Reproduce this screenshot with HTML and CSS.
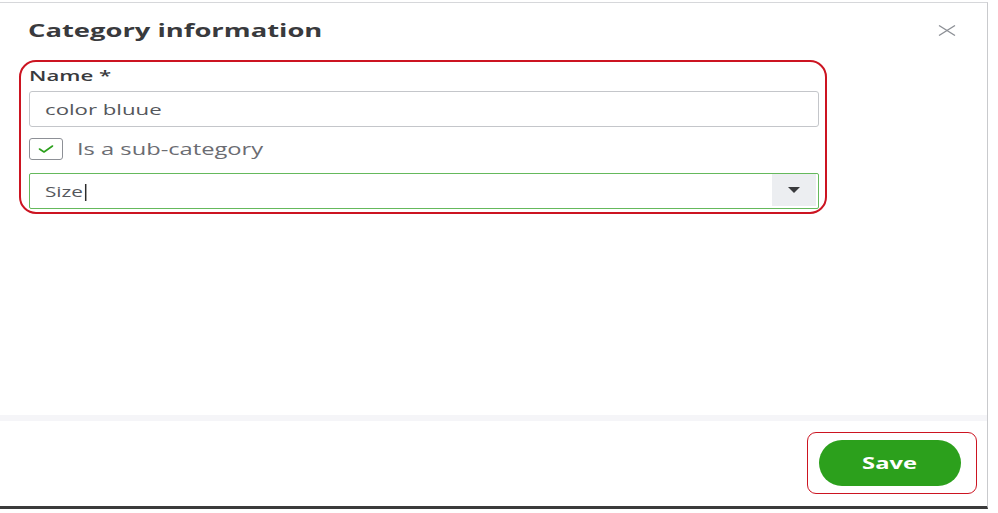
FILE: index.html
```html
<!DOCTYPE html>
<html lang="en">
<head>
<meta charset="utf-8">
<title>Category information</title>
<link rel="stylesheet" href="styles.css">
</head>
<body>
<div class="dialog">
  <div class="header">
    <h1 class="title"><span class="wide">Category information</span></h1>
    <button class="close" aria-label="Close">
      <svg width="18" height="11" viewBox="0 0 18 11"><path d="M1 0.5 L17 10.5 M17 0.5 L1 10.5" stroke="#8d9096" stroke-width="1.3" fill="none"/></svg>
    </button>
  </div>
  <div class="body">
    <div class="highlight">
      <label class="label"><span class="wide">Name *</span></label>
      <div class="input"><span class="wide">color bluue</span></div>
      <div class="check-row">
        <span class="checkbox">
          <svg width="16" height="8" viewBox="0 0 16 8"><path d="M1.5 4 L6 7 L14.5 1" stroke="#2ca01c" stroke-width="1.6" fill="none" stroke-linecap="round" stroke-linejoin="round"/></svg>
        </span>
        <span class="check-label"><span class="wide">Is a sub-category</span></span>
      </div>
      <div class="select">
        <div class="select-value"><span class="wide">Size<span class="caret"></span></span></div>
        <div class="select-btn">
          <svg width="12" height="6" viewBox="0 0 12 6"><path d="M0 0 H12 L6 6 Z" fill="#393a3d"/></svg>
        </div>
      </div>
    </div>
  </div>
  <div class="separator"></div>
  <div class="footer">
    <div class="save-mark">
      <button class="save"><span class="wide-c">Save</span></button>
    </div>
  </div>
</div>
</body>
</html>
```

FILE: styles.css
```css
* { box-sizing: border-box; }
html, body { margin: 0; padding: 0; background: #ffffff; }
body {
  font-family: "Open Sans", "Noto Sans", sans-serif;
  color: #393a3d;
}
.wide {
  display: inline-block;
  transform: scaleX(1.48);
  transform-origin: 0 50%;
  white-space: nowrap;
}
.wide-c {
  display: inline-block;
  transform: scaleX(1.48);
  transform-origin: 50% 50%;
  white-space: nowrap;
}
.title .wide { transform: scaleX(1.52); }
.dialog {
  margin-top: 2px;
  width: 988px;
  height: 507px;
  border-top: 1px solid #d6d7da;
  border-right: 1px solid #c9cacd;
  border-bottom: 3px solid #3b3b3b;
  display: flex;
  flex-direction: column;
}
.header {
  display: flex;
  align-items: center;
  justify-content: space-between;
  padding: 15px 31px 0 28px;
  height: 39px;
}
.title {
  margin: 0;
  font-size: 18px;
  line-height: 24px;
  font-weight: 700;
  color: #393a3d;
}
.close {
  border: 0;
  background: none;
  padding: 0;
  width: 18px;
  height: 11px;
  display: flex;
}
.body {
  flex: 1;
  padding: 18px 0 0 19px;
}
.highlight {
  width: 808px;
  border: 2px solid #cc1421;
  border-radius: 17px;
  padding: 4px 6px 3px 8px;
}
.label {
  display: block;
  font-size: 15px;
  line-height: 18px;
  font-weight: 600;
  color: #393a3d;
}
.input {
  margin-top: 7px;
  height: 36px;
  border: 1px solid #c4c6ca;
  border-radius: 3px;
  display: flex;
  align-items: center;
  padding: 0 15px;
  font-size: 15px;
  color: #55575c;
}
.check-row {
  margin-top: 11px;
  display: flex;
  align-items: center;
  height: 22px;
}
.checkbox {
  width: 34px;
  height: 22px;
  border: 1px solid #8d9096;
  border-radius: 3px;
  display: flex;
  align-items: center;
  justify-content: center;
}
.check-label {
  margin-left: 14px;
  font-size: 16px;
  line-height: 22px;
  color: #6b6c72;
}
.select {
  margin-top: 13px;
  height: 36px;
  border: 1px solid #65b95c;
  border-radius: 2px;
  display: flex;
  align-items: stretch;
}
.select-value {
  flex: 1;
  display: flex;
  align-items: center;
  padding: 0 15px;
  font-size: 14px;
  color: #55575c;
}
.caret {
  display: inline-block;
  width: 1px;
  height: 17px;
  margin-left: 1px;
  background: #2b2b2b;
  vertical-align: -4px;
}
.select-btn {
  width: 44px;
  margin: 0 2px 2px 0;
  background: #eceef1;
  display: flex;
  align-items: center;
  justify-content: center;
}
.separator {
  height: 6px;
  background: #f5f5f8;
}
.footer {
  display: flex;
  justify-content: flex-end;
  padding: 11px 10px 12px 0;
}
.save-mark {
  border: 1px solid #cc1421;
  border-radius: 9px;
  padding: 7px 15px 7px 11px;
}
.save {
  width: 142px;
  height: 46px;
  border: 0;
  border-radius: 23px;
  background: #2ca01c;
  color: #ffffff;
  font-family: "Open Sans", "Noto Sans", sans-serif;
  font-size: 16px;
  font-weight: 700;
  display: flex;
  align-items: center;
  justify-content: center;
  padding: 0;
}
```
